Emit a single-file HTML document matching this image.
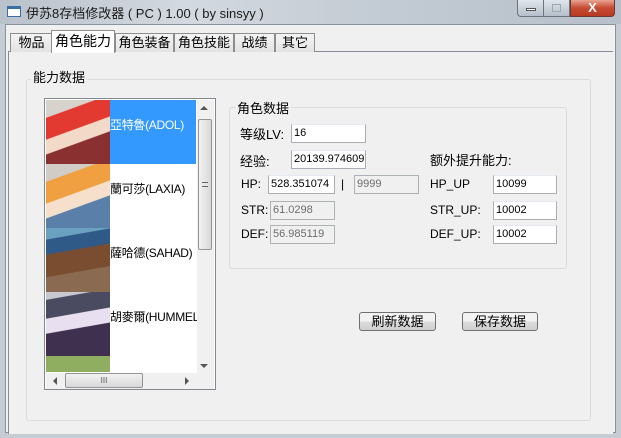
<!DOCTYPE html>
<html><head><meta charset="utf-8"><style>
*{margin:0;padding:0;box-sizing:border-box}
body{width:621px;height:438px;overflow:hidden;background:#c5ccd4;font-family:"Liberation Sans","Noto Sans CJK SC",sans-serif;font-size:12px;color:#000;position:relative}
.a{position:absolute}
.title{left:0;top:0;width:621px;height:24px;background:linear-gradient(90deg,#b9c1cb 0%,#d3d9e0 30%,#c3cbd4 60%,#b7c0ca 100%)}
.client{left:5px;top:24px;width:611px;height:409px;background:#f0f0f0;border:1px solid #8a939c}
.tab{top:33px;height:19px;border:1px solid #8d8d8d;border-bottom:none;background:linear-gradient(#f4f4f4,#e3e3e3);font-size:13px;text-align:center;line-height:18px}
.inp{height:19px;border:1px solid #abadb3;background:#fff;font-size:11px;line-height:17px;padding-left:2px;border-top-color:#e3e9ef;white-space:nowrap;overflow:hidden}
.dis{background:#f0f0f0;color:#6d6d6d;border-color:#adb2b5}
.lbl{font-size:12px}
.btn{height:19px;width:77px;border:1px solid #707070;border-radius:3px;background:linear-gradient(#f2f2f2 50%,#dddddd 50%,#cfcfcf);font-size:13px;text-align:center;line-height:17px}
.grp{border:1px solid #dcdcdc;border-radius:3px}
.leg{background:#f0f0f0;padding:0 2px;font-size:13px}
.it{font-size:12px;letter-spacing:-0.3px;white-space:nowrap}
</style></head><body>
<div class="a title"></div>
<div class="a" style="left:7px;top:6px;width:14px;height:11px;border:1px solid #3a6ea5;background:#fff;border-top:3px solid #3a6ea5"></div>
<div class="a" style="left:26px;top:3px;font-size:13px;color:#1a1a1a">伊苏8存档修改器 ( PC ) 1.00 ( by sinsyy )</div>
<div class="a" style="left:517px;top:0;width:27px;height:17px;border:1px solid #6c7480;border-top:none;border-radius:0 0 0 4px;background:linear-gradient(#dfe5ec,#b5bfcb)"><div class="a" style="left:8px;top:8px;width:10px;height:3px;background:#fff;border:1px solid #555"></div></div>
<div class="a" style="left:544px;top:0;width:26px;height:17px;border:1px solid #6c7480;border-top:none;border-left:none;background:linear-gradient(#dfe5ec,#b5bfcb)"><div class="a" style="left:8px;top:4px;width:9px;height:8px;border:1px solid #9aa;"></div></div>
<div class="a" style="left:570px;top:0;width:45px;height:17px;border:1px solid #6c3a30;border-top:none;border-radius:0 0 4px 0;background:linear-gradient(#e8a493,#c74a32 50%,#b83a22);color:#fff;font-weight:bold;text-align:center;font-size:13px;line-height:15px">X</div>
<div class="a client"></div>
<div class="a" style="left:8px;top:51px;width:605px;height:383px;border:1px solid #898c95;background:#f0f0f0;border-right:none;border-bottom:none"></div>
<div class="a tab" style="left:10px;width:43px">物品</div>
<div class="a tab" style="left:115px;width:59px">角色装备</div>
<div class="a tab" style="left:174px;width:60px">角色技能</div>
<div class="a tab" style="left:234px;width:41px">战绩</div>
<div class="a tab" style="left:275px;width:40px">其它</div>
<div class="a tab" style="left:51px;top:30px;height:23px;width:64px;background:#fff;line-height:21px;font-size:14px">角色能力</div>
<div class="a grp" style="left:26px;top:79px;width:565px;height:342px"></div>
<div class="a leg" style="left:31px;top:67px">能力数据</div>
<div class="a" style="left:44px;top:98px;width:172px;height:292px;border:1px solid #828790;background:#fff;overflow:hidden">
 <div class="a" style="left:1px;top:1px;width:64px;height:64px;background:linear-gradient(160deg,#d8d2cc 0 20%,#e23a30 21% 45%,#f2d9c8 46% 62%,#8a3030 63%)"></div>
 <div class="a" style="left:65px;top:1px;width:86px;height:64px;background:#3399ff"></div>
 <div class="a it" style="left:65px;top:17px;color:#fff">亞特魯(ADOL)</div>
 <div class="a" style="left:1px;top:65px;width:64px;height:64px;background:linear-gradient(160deg,#d0ccc6 0 20%,#f0a040 21% 45%,#f6e0cc 46% 62%,#5a7fa8 63%)"></div>
 <div class="a it" style="left:65px;top:81px">蘭可莎(LAXIA)</div>
 <div class="a" style="left:1px;top:129px;width:64px;height:64px;background:linear-gradient(170deg,#6aa0c0 0 15%,#2f5a88 16% 35%,#7a4d30 36% 65%,#8a6a50 66%)"></div>
 <div class="a it" style="left:65px;top:145px">薩哈德(SAHAD)</div>
 <div class="a" style="left:1px;top:193px;width:64px;height:64px;background:linear-gradient(170deg,#c8c8d0 0 10%,#4a4a60 11% 35%,#e8e0f0 36% 55%,#403050 56%)"></div>
 <div class="a it" style="left:65px;top:209px">胡麥爾(HUMMEL</div>
 <div class="a" style="left:1px;top:257px;width:64px;height:16px;background:#8fae60"></div>
 <div class="a" style="left:152px;top:1px;width:17px;height:273px;background:#f0f0f0"></div>
 <div class="a" style="left:155px;top:7px;width:0;height:0;border:4px solid transparent;border-bottom-color:#555;border-top:none"></div>
 <div class="a" style="left:153px;top:20px;width:14px;height:131px;border:1px solid #959595;border-radius:2px;background:linear-gradient(90deg,#f2f2f2,#d8d8d8)"></div>
 <div class="a" style="left:157px;top:83px;width:6px;height:5px;border-top:1px solid #666;border-bottom:1px solid #666"></div>
 <div class="a" style="left:155px;top:265px;width:0;height:0;border:4px solid transparent;border-top-color:#555;border-bottom:none"></div>
 <div class="a" style="left:1px;top:274px;width:168px;height:16px;background:#f0f0f0"></div>
 <div class="a" style="left:8px;top:278px;border:4px solid transparent;border-right-color:#555;border-left:none"></div>
 <div class="a" style="left:20px;top:274px;width:78px;height:15px;border:1px solid #959595;border-radius:2px;background:linear-gradient(#f2f2f2,#d8d8d8);font-size:8px;text-align:center;line-height:13px;color:#555">III</div>
 <div class="a" style="left:140px;top:278px;border:4px solid transparent;border-left-color:#555;border-right:none"></div>
</div>
<div class="a grp" style="left:229px;top:107px;width:338px;height:162px"></div>
<div class="a leg" style="left:235px;top:98px">角色数据</div>
<div class="a lbl" style="left:240px;top:124px;font-size:13px">等级LV:</div>
<div class="a inp" style="left:291px;top:124px;width:75px">16</div>
<div class="a lbl" style="left:240px;top:151px;font-size:13px">经验:</div>
<div class="a inp" style="left:291px;top:150px;width:75px">20139.974609</div>
<div class="a lbl" style="left:241px;top:177px">HP:</div>
<div class="a inp" style="left:268px;top:175px;width:67px">528.351074</div>
<div class="a" style="left:341px;top:177px;font-size:12px">|</div>
<div class="a inp dis" style="left:354px;top:175px;width:65px">9999</div>
<div class="a lbl" style="left:241px;top:203px">STR:</div>
<div class="a inp dis" style="left:270px;top:201px;width:65px">61.0298</div>
<div class="a lbl" style="left:241px;top:227px">DEF:</div>
<div class="a inp dis" style="left:270px;top:225px;width:65px">56.985119</div>
<div class="a" style="left:430px;top:150px;font-size:13px">额外提升能力:</div>
<div class="a lbl" style="left:430px;top:177px">HP_UP</div>
<div class="a inp" style="left:493px;top:175px;width:64px">10099</div>
<div class="a lbl" style="left:430px;top:203px">STR_UP:</div>
<div class="a inp" style="left:493px;top:201px;width:64px">10002</div>
<div class="a lbl" style="left:430px;top:227px">DEF_UP:</div>
<div class="a inp" style="left:493px;top:225px;width:64px">10002</div>
<div class="a btn" style="left:359px;top:312px">刷新数据</div>
<div class="a btn" style="left:462px;top:312px;width:76px">保存数据</div>
</body></html>
